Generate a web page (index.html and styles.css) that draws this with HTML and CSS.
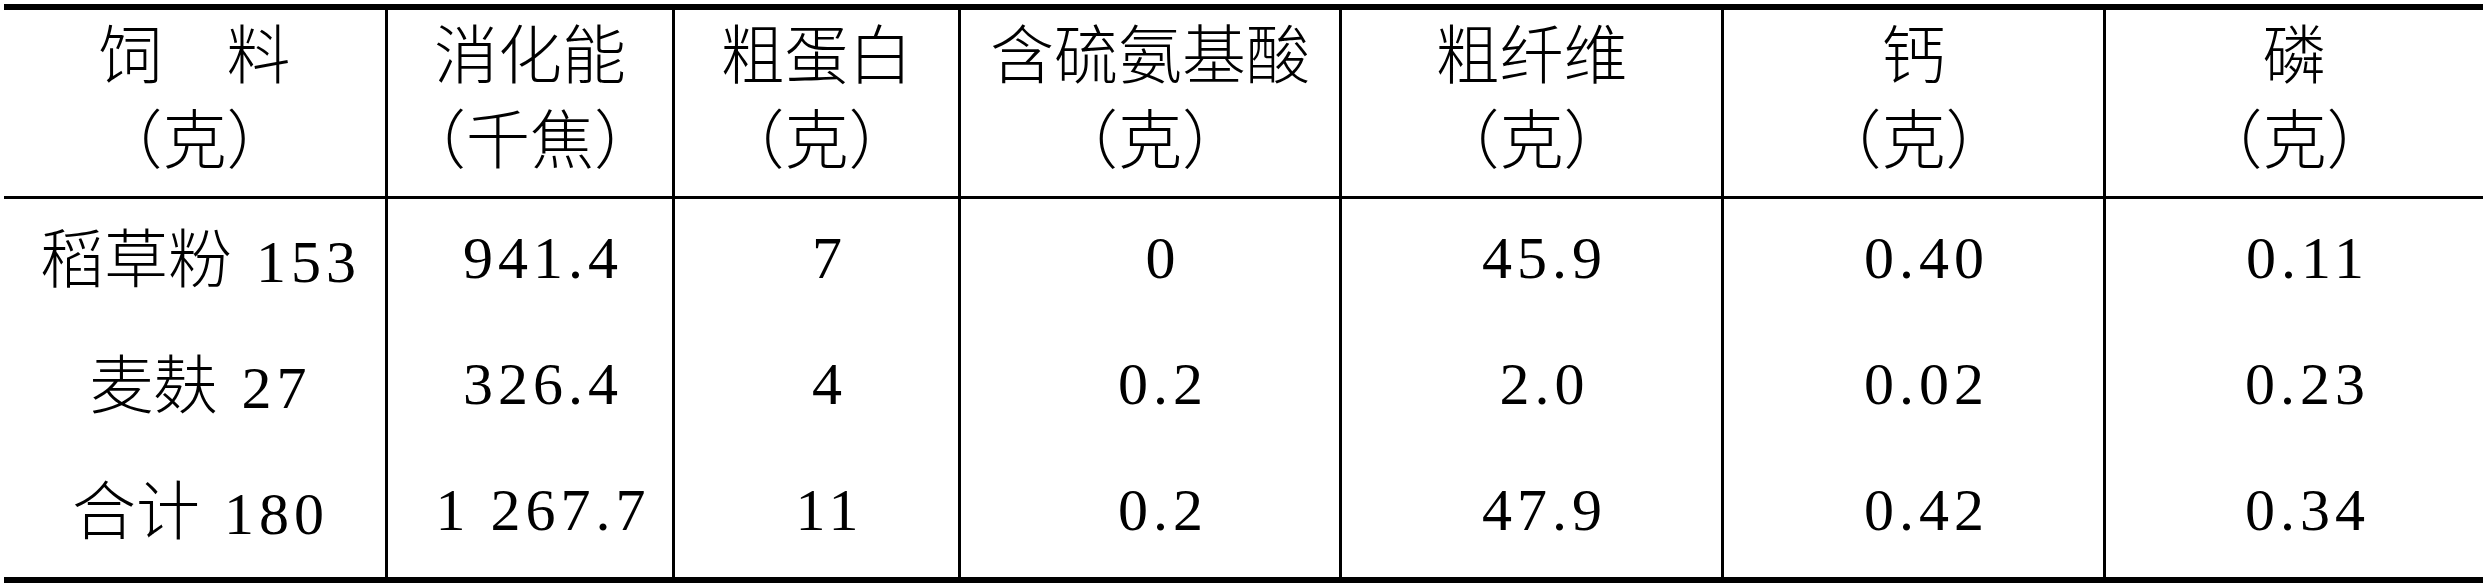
FILE: index.html
```html
<!DOCTYPE html>
<html lang="zh-CN">
<head>
<meta charset="utf-8">
<title>饲料营养成分表</title>
<link rel="stylesheet" href="styles.css">
</head>
<body>
<div class="tbl">
  <div class="c h first"><div class="ln">饲　料</div><div class="ln">（克）</div></div>
  <div class="c h"><div class="ln">消化能</div><div class="ln">（千焦）</div></div>
  <div class="c h"><div class="ln">粗蛋白</div><div class="ln">（克）</div></div>
  <div class="c h"><div class="ln">含硫氨基酸</div><div class="ln">（克）</div></div>
  <div class="c h"><div class="ln">粗纤维</div><div class="ln">（克）</div></div>
  <div class="c h"><div class="ln">钙</div><div class="ln">（克）</div></div>
  <div class="c h"><div class="ln">磷</div><div class="ln">（克）</div></div>

  <div class="c d first"><span>稻草粉 <span class="n">153</span></span></div>
  <div class="c d num"><span class="n">941.4</span></div>
  <div class="c d num"><span class="n">7</span></div>
  <div class="c d num"><span class="n">0</span></div>
  <div class="c d num"><span class="n">45.9</span></div>
  <div class="c d num"><span class="n">0.40</span></div>
  <div class="c d num"><span class="n">0.11</span></div>

  <div class="c d first"><span>麦麸 <span class="n">27</span></span></div>
  <div class="c d num"><span class="n">326.4</span></div>
  <div class="c d num"><span class="n">4</span></div>
  <div class="c d num"><span class="n">0.2</span></div>
  <div class="c d num"><span class="n">2.0</span></div>
  <div class="c d num"><span class="n">0.02</span></div>
  <div class="c d num"><span class="n">0.23</span></div>

  <div class="c d first"><span>合计 <span class="n">180</span></span></div>
  <div class="c d num"><span class="n">1 267.7</span></div>
  <div class="c d num"><span class="n">11</span></div>
  <div class="c d num"><span class="n">0.2</span></div>
  <div class="c d num"><span class="n">47.9</span></div>
  <div class="c d num"><span class="n">0.42</span></div>
  <div class="c d num"><span class="n">0.34</span></div>
</div>
</body>
</html>
```

FILE: styles.css
```css
html, body {
  margin: 0;
  padding: 0;
  background: #fff;
}

body {
  padding: 4px 0 0 4px;
  color: #000;
  font-family: "Liberation Serif", "Noto Sans CJK SC", serif;
  font-size: 64px;
}

.tbl {
  width: 2479px;
  display: grid;
  grid-template-columns: 381px 287px 286px 381px 382px 382px 380px;
  grid-template-rows: 189px 126px 126px 126px;
  border-top: 6px solid #000;
  border-bottom: 6px solid #000;
}

.c {
  box-sizing: border-box;
  display: flex;
  align-items: center;
  justify-content: center;
  border-left: 3px solid #000;
  white-space: pre;
}

.c.first {
  border-left: none;
}

.h {
  flex-direction: column;
  border-bottom: 3px solid #000;
  padding-bottom: 20px;
}

.ln {
  line-height: 85px;
  font-family: "Noto Sans CJK SC", sans-serif;
  font-weight: 300;
}

.d {
  line-height: 80px;
  padding-bottom: 8px;
}

.d.first {
  padding-left: 12px;
  font-family: "Noto Sans CJK SC", sans-serif;
  font-weight: 300;
  word-spacing: 10px;
}

.d.num {
  padding-left: 26px;
}

.n {
  font-family: "Liberation Serif", serif;
  font-weight: 400;
  font-size: 60px;
  letter-spacing: 5px;
  word-spacing: 0;
}
```
